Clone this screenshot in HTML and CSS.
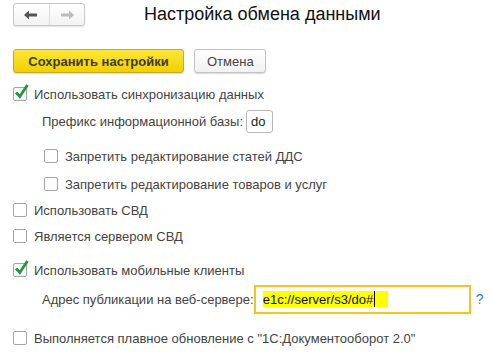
FILE: index.html
```html
<!DOCTYPE html>
<html>
<head>
<meta charset="utf-8">
<link rel="stylesheet" href="styles.css">
</head>
<body>
<div class="page">
  <div class="header">
    <div class="nav">
      <span class="nav-btn">
        <svg width="16" height="12" viewBox="0 0 16 12"><path d="M1 6 L6 1.5 L6 4.5 L14 4.5 L14 7.5 L6 7.5 L6 10.5 Z" fill="#555"/></svg>
      </span>
      <span class="nav-sep"></span>
      <span class="nav-btn">
        <svg width="16" height="12" viewBox="0 0 16 12"><path d="M15 6 L10 1.5 L10 4.5 L2 4.5 L2 7.5 L10 7.5 L10 10.5 Z" fill="#bbb"/></svg>
      </span>
    </div>
    <h1 class="title">Настройка обмена данными</h1>
  </div>

  <div class="actions">
    <button class="btn btn-primary">Сохранить настройки</button>
    <button class="btn">Отмена</button>
  </div>

  <div class="row r1">
    <span class="cb checked"><svg width="18" height="18" viewBox="0 0 18 18"><path d="M3 9.5 L6.8 13.5 L14.5 2" fill="none" stroke="#1e9a3c" stroke-width="2.8"/></svg></span>
    <span class="label">Использовать синхронизацию данных</span>
  </div>
  <div class="row r2 indent1">
    <span class="label">Префикс информационной базы:</span>
    <span class="field small">do</span>
  </div>
  <div class="row r3 indent2">
    <span class="cb"></span>
    <span class="label">Запретить редактирование статей ДДС</span>
  </div>
  <div class="row r4 indent2">
    <span class="cb"></span>
    <span class="label">Запретить редактирование товаров и услуг</span>
  </div>
  <div class="row r5">
    <span class="cb"></span>
    <span class="label">Использовать СВД</span>
  </div>
  <div class="row r6">
    <span class="cb"></span>
    <span class="label">Является сервером СВД</span>
  </div>
  <div class="row r7">
    <span class="cb checked"><svg width="18" height="18" viewBox="0 0 18 18"><path d="M3 9.5 L6.8 13.5 L14.5 2" fill="none" stroke="#1e9a3c" stroke-width="2.8"/></svg></span>
    <span class="label">Использовать мобильные клиенты</span>
  </div>
  <div class="row r8 indent1">
    <span class="label">Адрес публикации на веб-сервере:</span>
    <span class="field focus"><span class="sel">e1c://server/s3/do#<span class="caret"></span></span></span>
    <span class="help">?</span>
  </div>
  <div class="row r9">
    <span class="cb"></span>
    <span class="label">Выполняется плавное обновление с "1С:Документооборот 2.0"</span>
  </div>
</div>
</body>
</html>
```

FILE: styles.css
```css
html, body {
  margin: 0;
  padding: 0;
  background: #fff;
}
body {
  font-family: "Liberation Sans", Arial, sans-serif;
  font-size: 13px;
  color: #444;
}
.page {
  padding: 3px 0 0 13px;
}
.header {
  display: flex;
  align-items: center;
  height: 23px;
}
.nav {
  display: flex;
  align-items: stretch;
  width: 70px;
  height: 21px;
  border: 1px solid #c8c8c8;
  border-radius: 3px;
  background: linear-gradient(#ffffff, #f2f2f2);
  box-shadow: 0 1px 1px rgba(0,0,0,0.12);
}
.nav-btn {
  flex: 1;
  display: flex;
  align-items: center;
  justify-content: center;
}
.nav-sep {
  width: 1px;
  background: #dcdcdc;
}
.title {
  margin: 0 0 0 59px;
  font-size: 18px;
  font-weight: normal;
  color: #111;
  line-height: 23px;
}
.actions {
  display: flex;
  gap: 10px;
  margin-top: 23px;
  height: 24px;
}
.btn {
  font-family: "Liberation Sans", Arial, sans-serif;
  font-size: 13px;
  color: #444;
  height: 24px;
  padding: 0 12px;
  border: 1px solid #c3c3c3;
  border-radius: 3px;
  background: linear-gradient(#ffffff, #f1f1f1);
  box-shadow: 0 1px 1px rgba(0,0,0,0.15);
}
.btn-primary {
  width: 171px;
  font-weight: bold;
  color: #3f3a20;
  border-color: #c7a92a;
  background: linear-gradient(#fbe63a, #f2d000);
}
.btn:not(.btn-primary) {
  width: 72px;
}
.row {
  display: flex;
  align-items: center;
  height: 26px;
}
.r1 { margin-top: 8px; }
.r2 { margin-top: 1px; }
.r3 { margin-top: 9px; }
.r4 { margin-top: 2px; }
.r7 { margin-top: 8px; }
.r8 { margin-top: 1px; height: 30px; }
.r9 { margin-top: 11px; }
.indent1 { padding-left: 29px; }
.indent2 { padding-left: 31px; }
.cb {
  position: relative;
  width: 12px;
  height: 12px;
  border: 1px solid #a6a6a6;
  border-radius: 2px;
  background: #fff;
  margin-right: 7px;
  flex: none;
}
.cb svg {
  position: absolute;
  left: -1px;
  top: -5px;
}
.label {
  white-space: nowrap;
}
.field {
  display: flex;
  align-items: center;
  box-sizing: border-box;
  border: 1px solid #b8b8b8;
  border-radius: 3px;
  color: #222;
  font-size: 13px;
}
.field.small {
  margin-left: 3px;
  width: 27px;
  height: 23px;
  padding-left: 4px;
}
.field.focus {
  margin-left: 0;
  width: 217px;
  height: 29px;
  border: 2px solid #f6c51d;
  border-radius: 0;
  padding-left: 7px;
}
.sel {
  display: flex;
  align-items: center;
  background: #ffff00;
  color: #111;
  height: 16px;
  padding-right: 13px;
}
.caret {
  width: 1px;
  height: 16px;
  margin-left: 1px;
  background: #000;
}
.help {
  margin-left: 5px;
  color: #3b82c6;
  font-size: 14px;
}
```
